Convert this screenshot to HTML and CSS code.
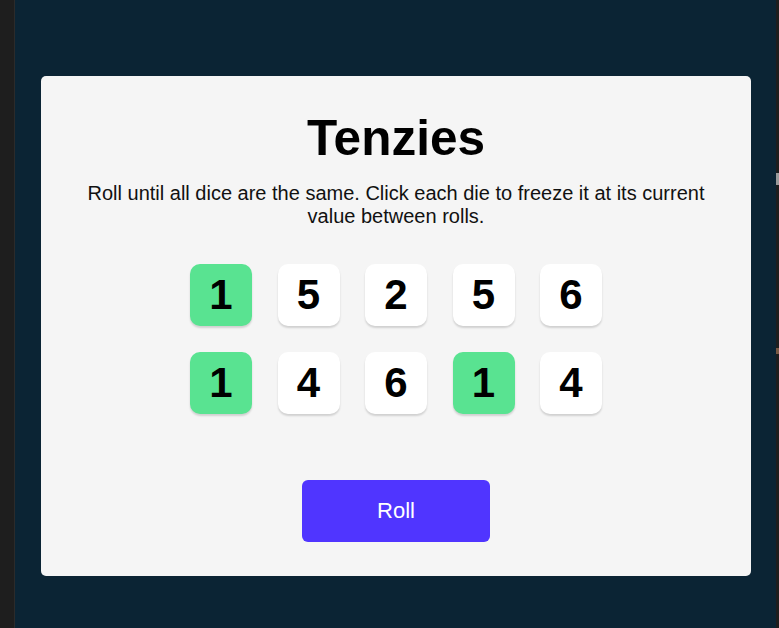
FILE: index.html
```html
<!DOCTYPE html>
<html>
<head>
<meta charset="utf-8">
<link rel="stylesheet" href="styles.css">
</head>
<body>
<div class="frame">
  <div class="side-left"></div>
  <main class="stage">
    <section class="card">
      <h1 class="title">Tenzies</h1>
      <p class="instructions">Roll until all dice are the same. Click each die to freeze it at its current value between rolls.</p>
      <div class="dice">
        <button class="die held">1</button>
        <button class="die">5</button>
        <button class="die">2</button>
        <button class="die">5</button>
        <button class="die">6</button>
        <button class="die held">1</button>
        <button class="die">4</button>
        <button class="die">6</button>
        <button class="die held">1</button>
        <button class="die">4</button>
      </div>
      <button class="roll">Roll</button>
    </section>
  </main>
  <div class="side-right">
    <span class="mark mark-a"></span>
    <span class="mark mark-b"></span>
  </div>
</div>
</body>
</html>
```

FILE: styles.css
```css
* { box-sizing: border-box; }
html, body {
  margin: 0;
  height: 100%;
}
body {
  background: #0b2434;
  font-family: "Liberation Sans", Arial, sans-serif;
  overflow: hidden;
}
.frame {
  display: flex;
  height: 628px;
}
.side-left {
  width: 15px;
  flex: none;
  background: #1e1e1e;
  border-right: 1px solid #2b2b2b;
}
.side-right {
  width: 3px;
  flex: none;
  background: #1e1e1e;
  display: flex;
  flex-direction: column;
}
.mark {
  display: block;
  width: 3px;
}
.mark-a {
  margin-top: 173px;
  height: 12px;
  background: #9a9a9a;
}
.mark-b {
  margin-top: 163px;
  height: 6px;
  background: #7a5a45;
}
.stage {
  flex: 1;
  padding: 76px 25px 52px 26px;
}
.card {
  background: #f5f5f5;
  border-radius: 5px;
  height: 500px;
  display: flex;
  flex-direction: column;
  align-items: center;
  padding-top: 33px;
}
.title {
  margin: 0;
  font-size: 49.5px;
  line-height: 57px;
  font-weight: 700;
  color: #000;
}
.instructions {
  margin: 16px 0 0;
  width: 660px;
  text-align: center;
  font-size: 20px;
  line-height: 23px;
  color: #111;
}
.dice {
  margin-top: 36px;
  display: grid;
  grid-template-columns: repeat(5, 62px);
  column-gap: 25.5px;
  row-gap: 26px;
}
.die {
  width: 62px;
  height: 62px;
  border: none;
  border-radius: 10px;
  background: #ffffff;
  box-shadow: 0 2px 2px rgba(0, 0, 0, 0.15);
  font-family: "Liberation Sans", Arial, sans-serif;
  font-size: 42px;
  font-weight: 700;
  color: #000;
  padding: 0;
  display: flex;
  align-items: center;
  justify-content: center;
}
.die.held {
  background: #59e391;
}
.roll {
  margin-top: 66px;
  width: 188px;
  height: 62px;
  border: none;
  border-radius: 6px;
  background: #5035ff;
  color: #fff;
  font-family: "Liberation Sans", Arial, sans-serif;
  font-size: 22px;
}
```
